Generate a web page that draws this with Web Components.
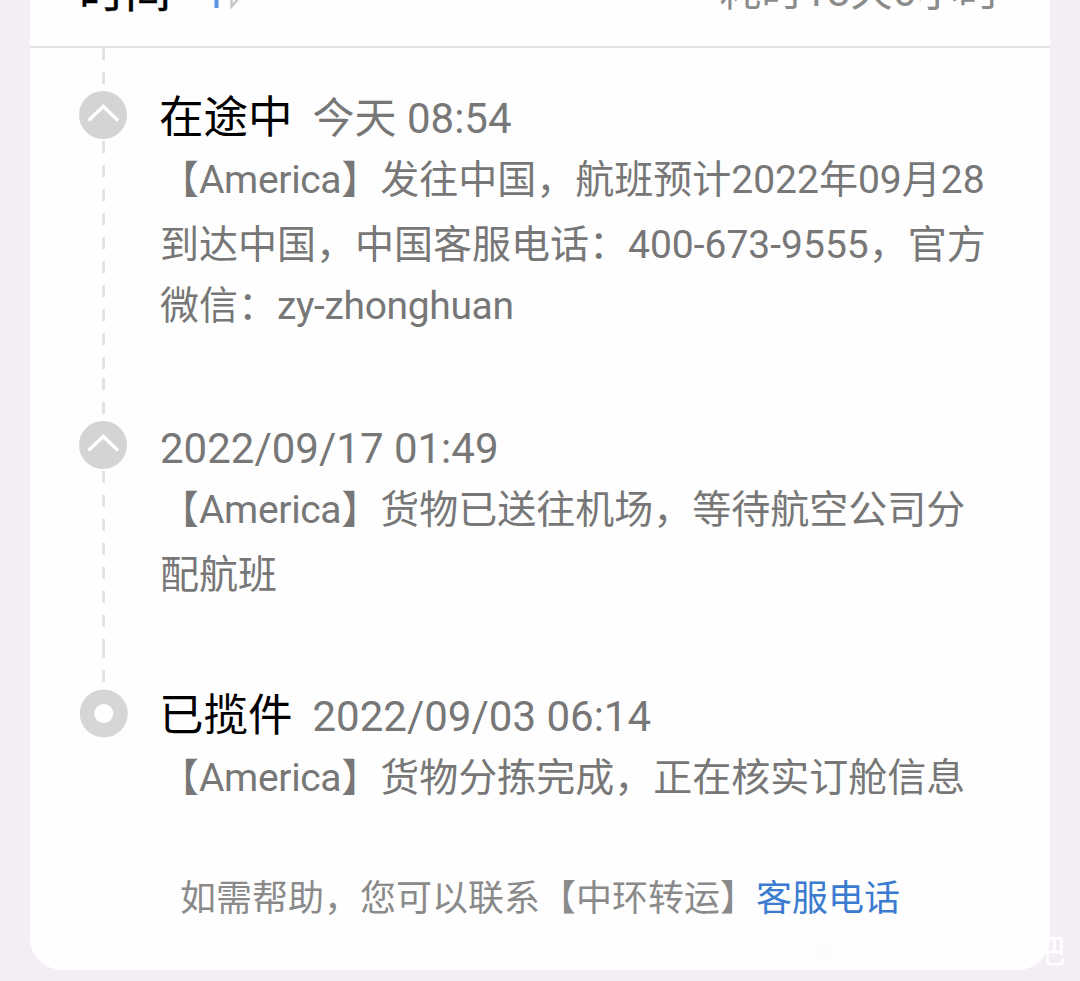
<!DOCTYPE html>
<html lang="zh-CN">
<head>
<meta charset="utf-8">
<title>物流时间</title>
<style>
    html, body{
        margin: 0;
        height: 100%;
        overflow: hidden;
        background: #f4edf6;
        font-family: Roboto, "Noto Sans CJK SC", sans-serif;
    }
    .latin{
        letter-spacing: -0.35px;
    }
</style>
</head>
<body>
<track-card>
    <track-header slot="header" label="时间" spent="耗时18天6小时"></track-header>
    <track-step icon="up" status="在途中" time="今天 08:54" style="height: 330px">
        <track-line>【<span class="latin">America</span>】发往中国，航班预计2022年09月28</track-line>
        <track-line>到达中国，中国客服电话：400-673-9555，官方</track-line>
        <track-line>微信：<span class="latin">zy-zhonghuan</span></track-line>
    </track-step>
    <track-step icon="up" time="2022/09/17 01:49" style="height: 268px">
        <track-line>【<span class="latin">America</span>】货物已送往机场，等待航空公司分</track-line>
        <track-line>配航班</track-line>
    </track-step>
    <track-step icon="dot" status="已揽件" time="2022/09/03 06:14" style="height: 203px">
        <track-line>【<span class="latin">America</span>】货物分拣完成，正在核实订舱信息</track-line>
    </track-step>
    <track-help slot="footer" link="客服电话">如需帮助，您可以联系【中环转运】</track-help>
</track-card>
<corner-mark>吧</corner-mark>

<script>
const define = (name, html, render) => {
    const template = document.createElement('template');
    template.innerHTML = html;

    customElements.define(name, class extends HTMLElement {
        constructor () {
            super();
            this._shadowRoot = this.attachShadow({ mode: 'open' });
            this._shadowRoot.appendChild(template.content.cloneNode(true));
        }

        connectedCallback () {
            if(render) render(this, this._shadowRoot);
        }
    });
};

define('track-card', `
    <style>
        :host{
            display: flex;
            flex-direction: column;
            box-sizing: border-box;
            height: 970px;
            margin: 0 30px;
            background: #fefefe;
            border-radius: 0 0 32px 32px;
            overflow: hidden;
        }
    </style>
    <slot name="header"></slot>
    <div class="steps"><slot></slot></div>
    <slot name="footer"></slot>
`);

define('track-header', `
    <style>
        :host{
            display: flex;
            justify-content: space-between;
            align-items: flex-end;
            box-sizing: border-box;
            flex: none;
            height: 48px;
            padding: 0 50px 28px 49px;
            border-bottom: 2px solid #e2e2e2;
        }
        .left{
            display: flex;
            align-items: flex-end;
            gap: 37px;
        }
        .label{
            font-size: 46px;
            line-height: 54px;
            color: #000;
            -webkit-text-stroke: 0.4px #000;
        }
        .spent{
            margin-bottom: 1px;
            font-size: 42px;
            line-height: 50px;
            color: #8b8b8b;
        }
        svg{
            display: block;
            margin-bottom: 9px;
        }
    </style>
    <div class="left">
        <span class="label"></span>
        <svg width="32" height="30" viewBox="0 0 32 30" fill="none">
            <path d="M8.5 29V3L1.5 15H8.5" stroke="#5a94e6" stroke-width="4"/>
            <path d="M23.500 2V27.500L31.500 18.500H25" stroke="#c8c8c8" stroke-width="2.500"/>
        </svg>
    </div>
    <span class="spent"></span>
`, (host, root) => {
    root.querySelector('.label').textContent = host.getAttribute('label');
    root.querySelector('.spent').textContent = host.getAttribute('spent');
});

const icons = {
    up: '<circle cx="24" cy="24" r="24" fill="#d5d3d5"/><path d="M9.500 29.500L24.300 15.500L39 29.500" fill="none" stroke="#fff" stroke-width="3.500"/>',
    dot: '<circle cx="24.800" cy="24.500" r="24" fill="#d8d5d8"/><circle cx="24.800" cy="24.500" r="9.500" fill="#fff"/>'
};

define('track-step', `
    <style>
        :host{
            display: flex;
            box-sizing: border-box;
            padding-left: 49px;
        }
        .rail{
            display: flex;
            flex-direction: column;
            align-items: center;
            width: 49px;
            margin-right: 32px;
        }
        .rail svg{
            flex: none;
            display: block;
        }
        .lead, .dashes{
            width: 3px;
            background: repeating-linear-gradient(#e3e3e3 0 12px, transparent 12px 24px);
        }
        .lead{
            flex: none;
            height: 36px;
            margin-bottom: 7px;
        }
        .dashes{
            flex: 1;
            margin-top: 1px;
        }
        :host([icon="dot"]) .dashes{
            display: none;
        }
        .body{
            padding-top: 43px;
        }
        .head{
            display: flex;
            align-items: baseline;
            gap: 20px;
            height: 58px;
            line-height: 55px;
            white-space: nowrap;
        }
        .status{
            margin-left: -1px;
            font-size: 44.500px;
            color: #000;
        }
        .status:empty{
            display: none;
        }
        .time{
            font-size: 42px;
            color: #777;
        }
    </style>
    <div class="rail">
        <div class="lead"></div>
        <svg width="49" height="49" viewBox="0 0 49 49"></svg>
        <div class="dashes"></div>
    </div>
    <div class="body">
        <div class="head"><span class="status"></span><span class="time"></span></div>
        <slot></slot>
    </div>
`, (host, root) => {
    root.querySelector('svg').innerHTML = icons[host.getAttribute('icon')];
    root.querySelector('.status').textContent = host.getAttribute('status') || '';
    root.querySelector('.time').textContent = host.getAttribute('time');
});

define('track-line', `
    <style>
        :host{
            display: block;
            height: 63px;
            line-height: 63px;
            font-size: 39px;
            color: #777;
            white-space: nowrap;
        }
        :host(:nth-child(2)){
            line-height: 66px;
        }
    </style>
    <slot></slot>
`);

define('track-help', `
    <style>
        :host{
            display: block;
            padding: 25px 0 0 150px;
            font-size: 36px;
            line-height: 50px;
            color: #8a8a8a;
            white-space: nowrap;
        }
        a{
            color: #3b7bd0;
        }
    </style>
    <slot></slot><a></a>
`, (host, root) => {
    root.querySelector('a').textContent = host.getAttribute('link');
});

// faint mark lying over the lower right corner of the card
define('corner-mark', `
    <style>
        :host{
            position: absolute;
            right: 15px;
            bottom: 12px;
            display: flex;
            align-items: center;
            justify-content: space-between;
            width: 258px;
            height: 34px;
            font-size: 33px;
            line-height: 34px;
            color: #fff;
        }
        i{
            display: block;
            box-sizing: border-box;
            width: 30px;
            height: 30px;
            padding: 6px;
            border: 1px solid #fcfcfc;
            background: #fcfcfc content-box;
        }
    </style>
    <i></i><span><slot></slot></span>
`);
</script>
</body>
</html>
